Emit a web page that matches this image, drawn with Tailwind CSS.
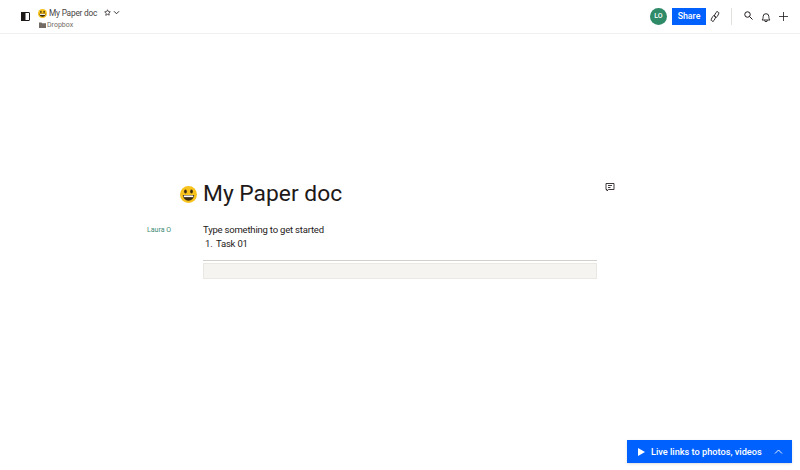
<!DOCTYPE html>
<html lang="en">
<head>
  <meta charset="UTF-8">
  <title>My Paper doc</title>
  <script src="https://cdn.jsdelivr.net/npm/@tailwindcss/browser@4"></script>
</head>
<body class="relative h-[470px] w-[800px] overflow-hidden bg-white font-['Roboto',sans-serif] text-[#1e1919]">
  <!-- top bar -->
  <header class="flex h-[34px] items-center border-b border-[#f0efee] pl-[21px] pr-[12px]">
    <svg class="h-[9px] w-[9px]" viewBox="0 0 9 9"><rect x="0.5" y="0.5" width="8" height="8" rx="0.5" fill="none" stroke="#1e1919"/><rect x="0" y="0" width="4.5" height="9" fill="#1e1919"/></svg>
    <div class="ml-[8px] flex flex-col pt-[3px]">
      <div class="flex h-[14px] items-center">
        <svg class="h-[9px] w-[9px]" viewBox="0 0 18 18"><circle cx="9" cy="9" r="9" fill="#f7c21c"/><ellipse cx="5.800" cy="5.800" rx="1.400" ry="2.200" fill="#3a2a10"/><ellipse cx="12.200" cy="5.800" rx="1.400" ry="2.200" fill="#3a2a10"/><path d="M3 9.500h12a6 6 0 0 1-12 0z" fill="#3a2a10"/><path d="M4 10h10v1.800H4z" fill="#fff"/></svg>
        <span class="ml-[2px] w-[48px] whitespace-nowrap text-[8.300px] leading-none tracking-[-0.2px] text-[#4a4545]">My Paper doc</span>
        <svg class="ml-[7px] h-[7px] w-[7px] -translate-y-[1px]" viewBox="0 0 14 14" fill="none" stroke="#1e1919" stroke-width="1.4"><path d="M7 1.5l1.7 3.6 3.9.5-2.9 2.7.8 3.9L7 10.8l-3.500 1.900.8-3.900L1.400 5.600l3.900-.5z"/></svg>
        <svg class="ml-[2px] h-[7px] w-[7px] -translate-y-[1px]" viewBox="0 0 14 14" fill="none" stroke="#1e1919" stroke-width="1.800"><path d="M2 4.500l5 5 5-5"/></svg>
      </div>
      <div class="flex h-[9px] items-center">
        <svg class="ml-[1px] h-[6px] w-[7px]" viewBox="0 0 14 12"><path d="M0 1h5l1.500 1.500H14V12H0z" fill="#736c64"/></svg>
        <span class="ml-px text-[7px] leading-none text-[#736c64]">Dropbox</span>
      </div>
    </div>
    <div class="ml-auto flex items-center">
      <div class="flex h-[17px] w-[17px] items-center justify-center rounded-full bg-[#2f8a68] text-[7px] font-medium text-white">LO</div>
      <button class="ml-[5px] h-[17px] w-[34px] bg-[#0061fe] text-[8.800px] font-medium text-white">Share</button>
      <svg class="ml-[4px] h-[11px] w-[10px]" viewBox="0 0 20 22" fill="none" stroke="#1e1919" stroke-width="1.600"><g transform="rotate(-62 10 11)"><rect x="-1" y="7" width="12" height="6" rx="3"/><rect x="9" y="9" width="12" height="6" rx="3"/></g></svg>
      <div class="ml-[11px] h-[17px] w-px bg-[#e3e1de]"></div>
      <svg class="ml-[12px] h-[9px] w-[9px] -translate-y-[1px]" viewBox="0 0 18 18" fill="none" stroke="#1e1919" stroke-width="2"><circle cx="7" cy="7" r="5.500"/><path d="M11 11l6 6"/></svg>
      <svg class="ml-[8px] h-[10px] w-[10px]" viewBox="2 1.500 16 17.500" fill="none" stroke="#1e1919" stroke-width="1.600"><path d="M3 15.500c1.500-1.500 2-3 2-6a5 5 0 0 1 10 0c0 3 .5 4.500 2 6z"/><path d="M7.500 16a2.500 2.500 0 0 0 5 0"/></svg>
      <svg class="ml-[8px] h-[9px] w-[9px]" viewBox="0 0 18 18" fill="none" stroke="#1e1919" stroke-width="1.600"><path d="M9 0v18M0 9h18"/></svg>
    </div>
  </header>

  <!-- document -->
  <main class="grid grid-cols-[203px_394px_1fr] pt-[144px]">
    <div class="flex h-[32px] items-center justify-end pr-[6px]">
      <svg class="h-[17px] w-[17px]" viewBox="0 0 18 18"><circle cx="9" cy="9" r="9" fill="#f7c21c"/><ellipse cx="5.800" cy="5.800" rx="1.400" ry="2.200" fill="#3a2a10"/><ellipse cx="12.200" cy="5.800" rx="1.400" ry="2.200" fill="#3a2a10"/><path d="M3 9.500h12a6 6 0 0 1-12 0z" fill="#3a2a10"/><path d="M4 10h10v1.800H4z" fill="#fff"/></svg>
    </div>
    <h1 class="h-[32px] whitespace-nowrap text-[22.800px] font-[450] leading-[32px]">My Paper doc</h1>
    <div class="pl-[8px] pt-[4px]">
      <svg class="h-[10px] w-[10px]" viewBox="0 0 20 20" fill="none" stroke="#1e1919" stroke-width="1.700"><path d="M2 3h16v12H7l-3 3v-3H2z"/><path d="M6 7h8M6 11h5"/></svg>
    </div>

    <div class="mt-[13px] flex h-[14px] items-center justify-end pr-[32px] text-[7px] text-[#3d8a74]">Laura O</div>
    <div class="mt-[13px] text-[9.500px] tracking-[-0.2px]">
      <p class="h-[14px] leading-[14px]">Type something to get started</p>
      <p class="flex h-[14px] pl-[2px] leading-[14px]"><span class="w-[11px]">1.</span><span>Task 01</span></p>
      <div class="mt-[9px] h-px bg-[#d3cfca]"></div>
      <div class="mt-[2px] h-[16px] border border-[#ebe8e3] bg-[#f6f4f0]"></div>
    </div>
  </main>

  <!-- promo banner -->
  <div class="absolute left-[627px] top-[440px] flex h-[23px] w-[165px] items-center bg-[#0061fe] pl-[11px] pr-[9px] text-white shadow-sm">
    <svg class="h-[8px] w-[7px]" viewBox="0 0 7 8"><path d="M0 0l7 4-7 4z" fill="#fff"/></svg>
    <span class="ml-[6px] text-[9.200px] font-medium">Live links to photos, videos</span>
    <svg class="ml-auto h-[7px] w-[9px]" viewBox="0 0 18 14" fill="none" stroke="#fff" stroke-width="1.800"><path d="M2 11l7-7 7 7"/></svg>
  </div>
</body>
</html>
